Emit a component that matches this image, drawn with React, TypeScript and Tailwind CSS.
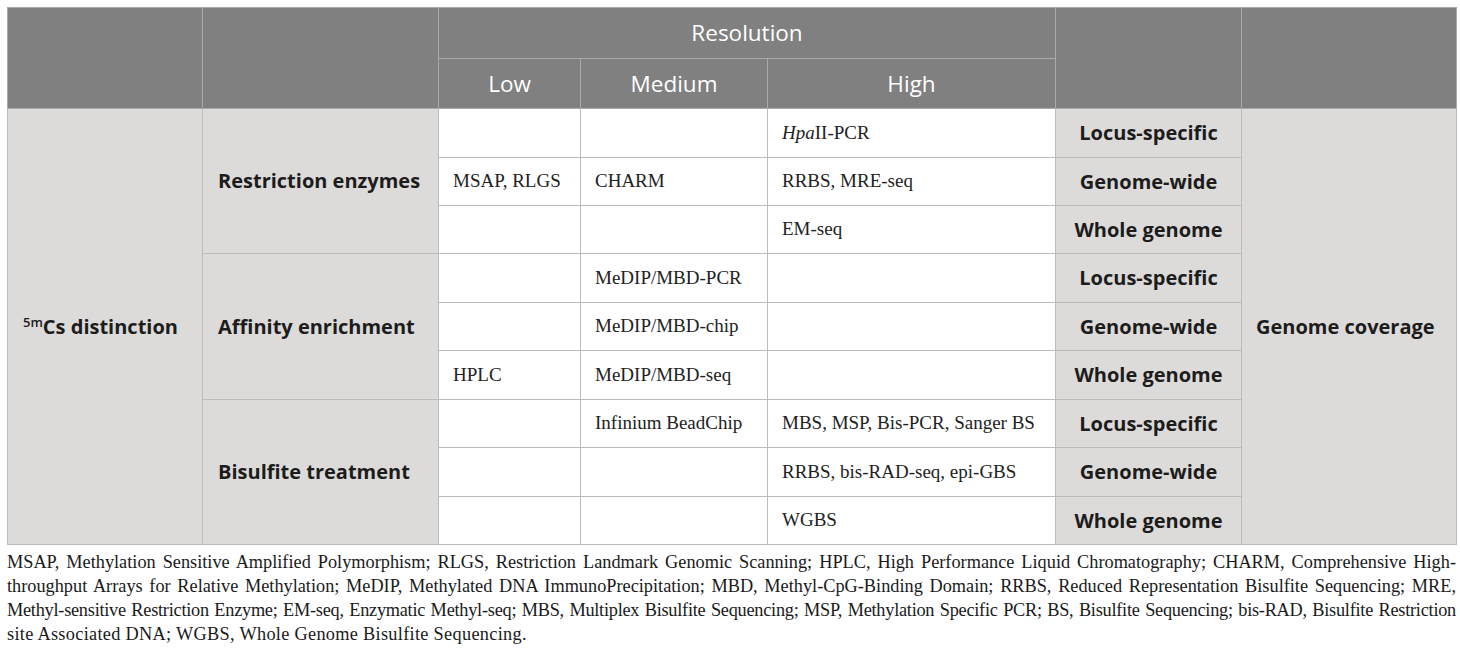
const sans = "font-['Open_Sans','Noto_Sans',sans-serif]"
const serif = "font-['Liberation_Serif','Times_New_Roman',serif]"

type Row = {
	low?: string
	medium?: string
	high?: React.ReactNode
	scope: string
}

const groups: { name: string; rows: Row[] }[] = [
	{
		name: 'Restriction enzymes',
		rows: [
			{
				high: (
					<>
						<i>Hpa</i>II-PCR
					</>
				),
				scope: 'Locus-specific',
			},
			{ low: 'MSAP, RLGS', medium: 'CHARM', high: 'RRBS, MRE-seq', scope: 'Genome-wide' },
			{ high: 'EM-seq', scope: 'Whole genome' },
		],
	},
	{
		name: 'Affinity enrichment',
		rows: [
			{ medium: 'MeDIP/MBD-PCR', scope: 'Locus-specific' },
			{ medium: 'MeDIP/MBD-chip', scope: 'Genome-wide' },
			{ low: 'HPLC', medium: 'MeDIP/MBD-seq', scope: 'Whole genome' },
		],
	},
	{
		name: 'Bisulfite treatment',
		rows: [
			{ medium: 'Infinium BeadChip', high: 'MBS, MSP, Bis-PCR, Sanger BS', scope: 'Locus-specific' },
			{ high: 'RRBS, bis-RAD-seq, epi-GBS', scope: 'Genome-wide' },
			{ high: 'WGBS', scope: 'Whole genome' },
		],
	},
]

// footnote lines are broken as in the printed table
const footnote = [
	{
		text: 'MSAP, Methylation Sensitive Amplified Polymorphism; RLGS, Restriction Landmark Genomic Scanning; HPLC, High Performance Liquid Chromatography; CHARM, Comprehensive High-',
		cls: 'text-justify [text-align-last:justify]',
	},
	{
		text: 'throughput Arrays for Relative Methylation; MeDIP, Methylated DNA ImmunoPrecipitation; MBD, Methyl-CpG-Binding Domain; RRBS, Reduced Representation Bisulfite Sequencing; MRE,',
		cls: 'text-justify [text-align-last:justify]',
	},
	{
		text: 'Methyl-sensitive Restriction Enzyme; EM-seq, Enzymatic Methyl-seq; MBS, Multiplex Bisulfite Sequencing; MSP, Methylation Specific PCR; BS, Bisulfite Sequencing; bis-RAD, Bisulfite Restriction',
		cls: 'text-justify [text-align-last:justify] tracking-[-0.25px]',
	},
	{
		text: 'site Associated DNA; WGBS, Whole Genome Bisulfite Sequencing.',
		cls: 'text-left tracking-[0.3px]',
	},
]

const rowHeights = ['h-[49px]', 'h-[48px]', 'h-[48px]', 'h-[49px]', 'h-[48px]', 'h-[49px]', 'h-[48px]', 'h-[49px]', 'h-[48px]']

export default function App() {
	const head = `border border-[#a9a9a9] bg-[#808080] text-white font-normal text-[22.5px] ${sans}`
	const label = `border border-[#bcbcbc] bg-[#dcdbd9] text-[#1c1c1c] font-bold text-[20px] ${sans}`
	const data = `border border-[#bcbcbc] bg-white text-[#222] text-[19px] px-[14px] text-left ${serif}`

	return (
		<div className="min-h-screen bg-white pl-[7px] pr-[4px] pt-[7px]">
			<table className="w-[1449px] table-fixed border-collapse border border-[#bcbcbc]">
				<colgroup>
					<col className="w-[195px]" />
					<col className="w-[236px]" />
					<col className="w-[142px]" />
					<col className="w-[187px]" />
					<col className="w-[288px]" />
					<col className="w-[186px]" />
					<col className="w-[215px]" />
				</colgroup>
				<thead>
					<tr className="h-[51px]">
						<th rowSpan={2} className={head} />
						<th rowSpan={2} className={head} />
						<th colSpan={3} className={head}>
							Resolution
						</th>
						<th rowSpan={2} className={head} />
						<th rowSpan={2} className={head} />
					</tr>
					<tr className="h-[50px]">
						<th className={head}>Low</th>
						<th className={head}>Medium</th>
						<th className={head}>High</th>
					</tr>
				</thead>
				<tbody>
					{groups.map((g, gi) =>
						g.rows.map((r, ri) => {
							const idx = gi * 3 + ri
							return (
								<tr key={idx} className={rowHeights[idx]}>
									{idx === 0 && (
										<td rowSpan={9} className={`${label} pl-[15px] text-left`}>
											<sup className="relative -top-[7px] align-baseline text-[13px] font-semibold">5m</sup>Cs distinction
										</td>
									)}
									{ri === 0 && (
										<td rowSpan={3} className={`${label} pl-[15px] text-left`}>
											{g.name}
										</td>
									)}
									<td className={data}>{r.low}</td>
									<td className={data}>{r.medium}</td>
									<td className={data}>{r.high}</td>
									<td className={`${label} text-center`}>{r.scope}</td>
									{idx === 0 && (
										<td rowSpan={9} className={`${label} pl-[14px] text-left`}>
											Genome coverage
										</td>
									)}
								</tr>
							)
						}),
					)}
				</tbody>
			</table>
			<div className={`mt-[5px] w-[1449px] text-[18.3px] leading-[24px] text-[#1a1a1a] ${serif}`}>
				{footnote.map((line, i) => (
					<p key={i} className={`whitespace-nowrap ${line.cls}`}>
						{line.text}
					</p>
				))}
			</div>
		</div>
	)
}
